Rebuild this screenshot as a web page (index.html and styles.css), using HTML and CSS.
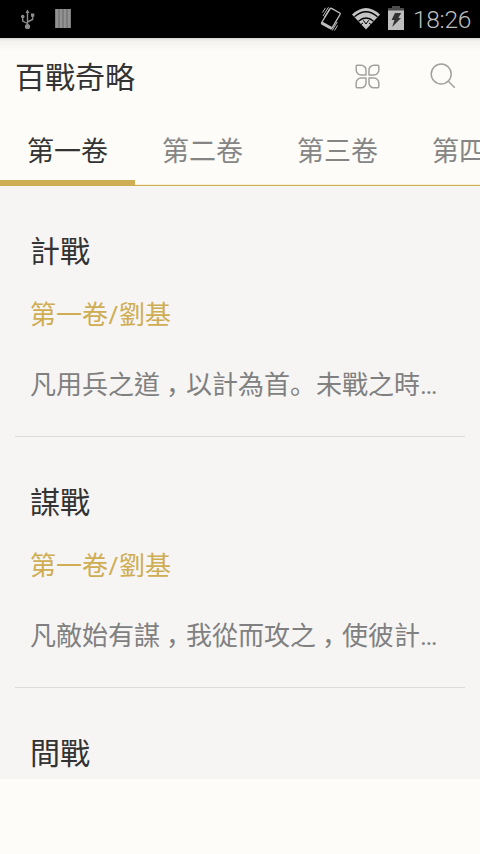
FILE: index.html
```html
<!DOCTYPE html>
<html lang="zh-Hant">
<head>
    <meta charset="UTF-8">
    <meta name="viewport" content="width=device-width, initial-scale=1.0">
    <title>百戰奇略</title>
    <link rel="stylesheet" href="styles.css">
</head>
<body>
    <div class="status-bar">
        <svg class="usb" width="16" height="22" viewBox="0 0 16 22" fill="none" stroke="#8c8c8c" stroke-width="1.4">
            <path d="M7.500 17V3M7.500 14.500L2.700 12V7M7.500 13L12.600 10.500V6"/>
            <path d="M5.500 4L7.500 .5l2 3.500z" fill="#8c8c8c" stroke="none"/>
            <circle cx="7.500" cy="17.500" r="2.600" fill="#8c8c8c" stroke="none"/>
            <circle cx="2.700" cy="7.500" r="1.800" fill="#8c8c8c" stroke="none"/>
            <path d="M11 4.500h3.300v3.200H11z" fill="#8c8c8c" stroke="none"/>
        </svg>
        <svg class="bars" width="16" height="19" viewBox="0 0 16 19">
            <path d="M0 0h16v19H0z" fill="#666"/>
            <path d="M.5 0h3v19h-3zM4.500 0h3v19h-3zM8.500 0h3v19h-3zM12.500 0h3v19h-3z" fill="#929292"/>
        </svg>
        <svg class="vibrate" width="22" height="26" viewBox="0 0 22 26" fill="none" stroke="#bebebe">
            <path d="M11.500 2.300L19.800 7Q20.500 7.500 20 8.500L12 22Q11.300 23 10.500 22.500L2 18Q1.200 17.400 1.700 16.500L10 3Q10.500 2 11.500 2.300z" stroke-width="1.400"/>
            <path d="M2 17l9.300 5.200" stroke-width="2.800"/>
            <path d="M3 10L8.500 1.200M4.500 11L9.700 2.500M2.500 6.500L5.500 1.800M12.200 24.500L17.300 16M14.500 24.500L17.500 19.500" stroke-width="1"/>
        </svg>
        <svg class="wifi" width="30" height="23" viewBox="0 0 30 23">
            <path d="M1 7.500Q15-5.500 29 7.500L15 22.500z" fill="#c4c4c4"/>
            <path d="M3.500 9.800Q15-.2 26.500 9.800" fill="none" stroke="#000" stroke-width="1.300"/>
            <path d="M7.500 14.200Q15 7.800 22.500 14.200" fill="none" stroke="#000" stroke-width="1.300"/>
            <path d="M12.300 13.300L15 17l2.700-3.700" fill="none" stroke="#000" stroke-width="1"/>
            <path d="M10 17.500l2-1.500M20 17.500l-2-1.500" stroke="#000" stroke-width="1"/>
        </svg>
        <svg class="battery" width="16" height="24" viewBox="0 0 16 24">
            <path d="M4 0h8v2h4v4H0V2h4z" fill="#4c4c4c"/>
            <path d="M0 4.500h16V24H0z" fill="#bebebe"/>
            <path d="M7 7h6.200L10.300 12H13L4.200 21l2.200-7H3.500z" fill="#333"/>
        </svg>
        <span class="clock">18:26</span>
    </div>

    <div class="header">
        <h1>百戰奇略</h1>
        <svg class="menu-icon" width="25" height="25" viewBox="0 0 25.400 25.400" fill="none" stroke="#a0a09e" stroke-width="1.500" stroke-linejoin="round">
            <path d="M11.200 11.200H6.200A5 5 0 0 1 1.200 6.200V2.200Q1.200 1.200 2.200 1.200H6.200A5 5 0 0 1 11.200 6.200z"/>
            <path d="M14.200 11.200V6.200A5 5 0 0 1 19.200 1.200H23.200Q24.200 1.200 24.200 2.200V6.200A5 5 0 0 1 19.200 11.200z"/>
            <path d="M11.200 14.200V19.200A5 5 0 0 1 6.200 24.200H2.200Q1.200 24.200 1.200 23.200V19.200A5 5 0 0 1 6.200 14.200z"/>
            <path d="M14.200 14.200H19.200A5 5 0 0 1 24.200 19.200V23.200Q24.200 24.200 23.200 24.200H19.200A5 5 0 0 1 14.200 19.200z"/>
        </svg>
        <svg class="search-icon" width="26" height="26" viewBox="0 0 26 26" fill="none" stroke="#a0a09e" stroke-width="1.500">
            <circle cx="11.200" cy="11" r="10"/>
            <path d="M18.300 18.200L24.800 24.700"/>
        </svg>
    </div>

    <div class="tabs">
        <div class="tab active">第一卷</div>
        <div class="tab">第二卷</div>
        <div class="tab">第三卷</div>
        <div class="tab">第四卷</div>
    </div>

    <div class="list">
        <div class="item">
            <h2>計戰</h2>
            <div class="meta">第一卷<span class="slash">/</span>劉基</div>
            <div class="desc">凡用兵之道<span class="comma" lang="zh-Hans">，</span>以計為首<span class="stop" lang="zh-Hans">。</span>未戰之時<span class="dots">…</span></div>
        </div>
        <div class="item">
            <h2>謀戰</h2>
            <div class="meta">第一卷<span class="slash">/</span>劉基</div>
            <div class="desc">凡敵始有謀<span class="comma" lang="zh-Hans">，</span>我從而攻之<span class="comma" lang="zh-Hans">，</span>使彼計<span class="dots">…</span></div>
        </div>
        <div class="item">
            <h2>間戰</h2>
        </div>
    </div>
</body>
</html>
```
FILE: styles.css
```css
* { box-sizing: border-box; }
body { margin: 0; height: 854px; overflow: hidden; background: #fdfcf8; color: #333; font-family: "Open Sans", "Noto Sans CJK TC", sans-serif; }
h1, h2 { margin: 0; font-weight: normal; }

.status-bar { display: flex; align-items: flex-start; height: 38px; background: #000; color: #bebebe; }
.usb { margin: 9px 0 0 20px; }
.bars { margin: 9px 0 0 19px; }
.vibrate { margin: 6px 0 0 249px; }
.wifi { margin: 7px 0 0 9px; }
.battery { margin: 6px 0 0 7px; }
.clock { margin-left: 9px; font: 300 24.5px/40px Roboto, sans-serif; letter-spacing: -0.3px; white-space: nowrap; }

.header { display: flex; align-items: center; height: 76px; padding: 0 24px 0 15px; background: linear-gradient(#d8d7d4, #f3f2ee 3px, #fdfcf8 14px); }
h1 { flex: 1; padding-top: 1px; font-size: 30px; line-height: 40px; }
.search-icon { margin-left: 50px; }

.tabs { display: flex; height: 72px; overflow: hidden; border-bottom: 1px solid #cfad52; }
.tab { flex: none; width: 135px; height: 71px; line-height: 74px; font-size: 27px; text-align: center; color: #858585; border-bottom: 1px solid #faf0d8; }
.active { color: #333; border-bottom: 5px solid #cfad52; }

.list { height: 593px; overflow: hidden; padding: 0 15px; background: #f6f5f4; }
.item { height: 251px; padding: 47px 15px 0; border-bottom: 1px solid #dcdbd9; }
h2 { font-size: 30px; line-height: 36px; }
.meta { margin-top: 28px; font-size: 26px; line-height: 34px; color: #cfad52; }
.slash { padding: 0 1px 0 0.5px; }
.desc { margin-top: 35px; font-size: 26px; line-height: 34px; color: #808080; white-space: nowrap; }
.stop, .comma { font-family: "Noto Sans CJK SC", sans-serif; }
.comma { padding: 0 7px 0 6px; font-feature-settings: "halt"; }
.dots { font-family: Roboto, sans-serif; }
```
